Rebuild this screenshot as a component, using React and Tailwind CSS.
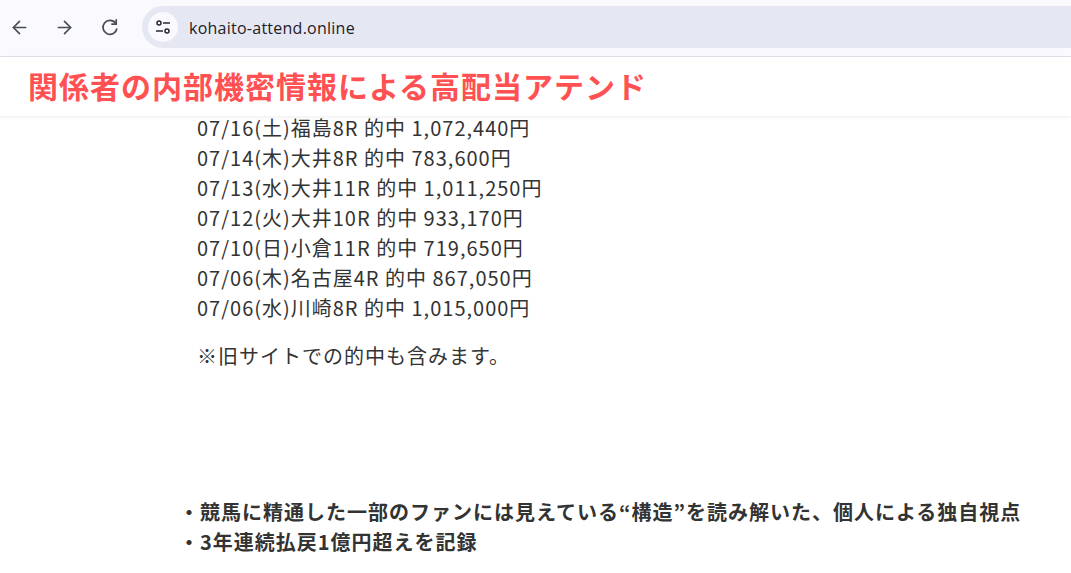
import React from 'react';
import { ArrowLeft, ArrowRight } from 'lucide-react';

const hits = [
  '07/16(土)福島8R 的中 1,072,440円',
  '07/14(木)大井8R 的中 783,600円',
  '07/13(水)大井11R 的中 1,011,250円',
  '07/12(火)大井10R 的中 933,170円',
  '07/10(日)小倉11R 的中 719,650円',
  '07/06(木)名古屋4R 的中 867,050円',
  '07/06(水)川崎8R 的中 1,015,000円',
];

const App = () => {
  return (
    <div className="h-[573px] w-[1071px] overflow-hidden bg-white font-['Noto_Sans_CJK_JP','Noto_Sans',sans-serif] text-[#333333]">
      {/* browser bar */}
      <div className="flex h-[57px] items-center border-b border-[#e1e2ea] bg-[#f9f9fe] pb-[2px] pl-[9px]">
        <ArrowLeft className="h-[21px] w-[21px] text-[#474c55]" strokeWidth={1.9} />
        <ArrowRight className="ml-[24px] h-[21px] w-[21px] text-[#474c55]" strokeWidth={1.9} />
        <svg className="ml-[25px]" width="20" height="20" viewBox="0 0 20 20" fill="none" stroke="#474c55" strokeWidth="1.7">
          <path d="M15.6 6.2A7 7 0 1 0 16.9 11.5" />
          <path d="M16.2 2.2v4.9h-4.9" />
        </svg>
        <div className="ml-[22px] flex h-[42px] min-w-0 flex-1 items-center rounded-l-full bg-[#e5e8f3] pl-[6px]">
          <div className="flex h-[30px] w-[30px] items-center justify-center rounded-full bg-[#f9f9fe]">
            <svg width="18" height="18" viewBox="0 0 18 18" fill="none" stroke="#26282c" strokeWidth="1.5">
              <circle cx="5" cy="5" r="2" />
              <path d="M9 5h7" />
              <circle cx="13" cy="13" r="2" />
              <path d="M2 13h7" />
            </svg>
          </div>
          <span className="ml-[11px] mt-[2px] font-['Open_Sans',sans-serif] text-[16px] tracking-[0.25px] text-[#1f2024]">kohaito-attend.online</span>
        </div>
      </div>

      {/* site header */}
      <div className="flex h-[59px] items-center bg-white pb-[2px] pl-[28px] shadow-[0_1px_4px_rgba(0,0,0,0.08)]">
        <h1 className="text-[30px] font-bold tracking-[1px] text-[#ff5052]">関係者の内部機密情報による高配当アテンド</h1>
      </div>

      <div className="pl-[197px] text-[20px] leading-[30px] tracking-[1px]">
        <div className="-mt-[3px]">
          {hits.map((hit) => (
            <p key={hit}>{hit}</p>
          ))}
        </div>
        <p className="mt-[18px]">※旧サイトでの的中も含みます。</p>
      </div>

      <ul className="mt-[126px] pl-[179px] text-[20px] font-bold leading-[30px] tracking-[1px]">
        <li>・競馬に精通した一部のファンには見えている“構造”を読み解いた、個人による独自視点</li>
        <li>・3年連続払戻1億円超えを記録</li>
      </ul>
    </div>
  );
};

export default App;
